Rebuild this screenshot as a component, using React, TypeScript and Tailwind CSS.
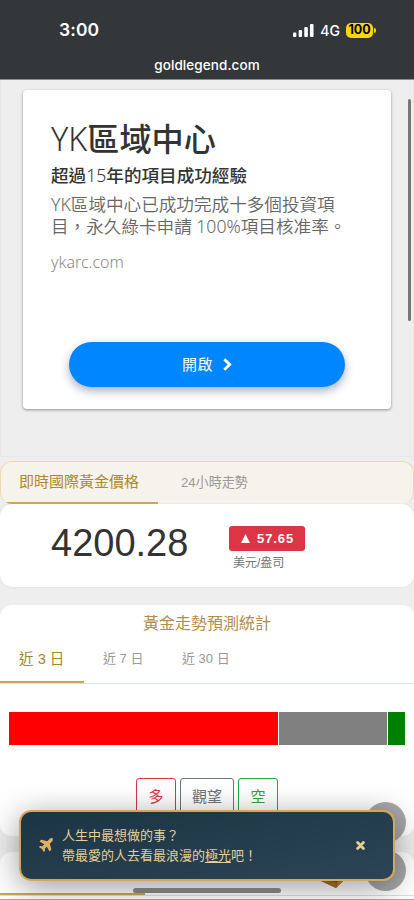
import clsx from "clsx";
import { FaPlane } from "react-icons/fa";

const forecast = [
    { label: "多", value: 268, bar: "bg-[#ff0000]", button: "w-10 border-[#dc3545] text-[#dc3545]" },
    { label: "觀望", value: 108, bar: "bg-[#808080]", button: "w-[54px] border-[#6c757d] text-[#6c757d]" },
    { label: "空", value: 17, bar: "bg-[#008000]", button: "w-10 border-[#28a745] text-[#28a745]" },
];

const ranges = [
    { title: "近 3 日", className: "w-[84px] pl-[19px] text-[14.6px] leading-[45px] text-[#a9851f]" },
    { title: "近 7 日", className: "w-[79px] pl-[19px] text-[13px] leading-[43px] text-[#999]" },
    { title: "近 30 日", className: "w-[90px] pl-[19px] text-[13px] leading-[43px] text-[#999]" },
];

function StatusBar() {
    return (
        <header className="h-20 shrink-0 border-b border-[#8b8c8d] bg-[#343739] font-['Inter','Liberation_Sans',sans-serif] text-white">
            <div className="flex h-[61px] items-center pl-[59px] pr-[38px]">
                <span className="w-[235px] text-[17.5px] font-semibold tracking-[0.1px]">3:00</span>
                <svg className="h-[13px] w-[21px]" viewBox="0 0 21 13" fill="white">
                    <rect x="0" y="8.5" width="3.4" height="4.5" rx="1" />
                    <rect x="5.7" y="6" width="3.4" height="7" rx="1" />
                    <rect x="11.3" y="3" width="3.6" height="10" rx="1" />
                    <rect x="17" y="0" width="3.6" height="13" rx="1" />
                </svg>
                <span className="ml-[6px] w-[26px] text-[14px] font-medium">4G</span>
                <span className="flex h-[15px] w-[27px] items-center justify-center rounded-[5px] bg-[#fcd60a] text-[12.5px] font-bold text-black">
                    100
                </span>
                <span className="ml-px h-[5px] w-[2px] rounded-r-full bg-[#fcd60a]" />
            </div>
            <div className="-mt-[4px] text-center text-[13.5px] font-medium leading-[17px] tracking-[0.08px]">goldlegend.com</div>
        </header>
    );
}

function AdCard() {
    return (
        <section className="h-[377px] shrink-0 border border-t-0 border-[#e6e6e6] px-[22px] pt-[10px]">
            <div className="flex h-[319px] flex-col rounded-[4px] bg-white px-[28px] pt-[28px] font-['Noto_Sans','Noto_Sans_CJK_TC',sans-serif] shadow-[0_1px_3px_rgba(0,0,0,0.4)]">
                <h1 className="whitespace-nowrap text-[32.2px] leading-[41px] text-[#333]">
                    <span className="font-[350]">YK</span>
                    <span className="font-medium">區域中心</span>
                </h1>
                <h2 className="mt-[4px] whitespace-nowrap text-[17.6px] font-medium leading-[24px] text-[#333]">
                    超過<span className="font-[350]">15</span>年的項目成功經驗
                </h2>
                <p className="mt-[6px] whitespace-nowrap text-[17.6px] font-[350] leading-[22px] text-[#666]">
                    YK區域中心已成功完成十多個投資項
                    <br />
                    目，永久綠卡申請 100%項目核准率。
                </p>
                <span className="mt-[15px] text-[16px] font-[350] leading-[20px] text-[#8a8a8a]">ykarc.com</span>
                <button className="mx-[18px] mt-[70px] flex h-[45px] shrink-0 items-center justify-center gap-[10px] rounded-full bg-[#0086ff] text-[15px] text-white shadow-[0_4px_10px_rgba(40,60,90,0.4)]">
                    <span className="tracking-[0.4px]">開啟</span>
                    <svg className="h-[13px] w-[9px]" viewBox="0 0 9 13" fill="none" stroke="white" strokeWidth="2.8">
                        <path d="M1.3 1.2 6.7 6.5 1.3 11.8" />
                    </svg>
                </button>
            </div>
        </section>
    );
}

function PriceCard() {
    return (
        <section className="shrink-0">
            <div className="mt-[4px] flex h-[43px] items-stretch overflow-hidden rounded-[12px] border border-b-0 border-[#ead9ad] bg-[#f5f3ec]">
                <div className="w-[157px] border-b-2 border-[#c9a957] pl-[18px] text-[15px] leading-[40px] text-[#b08a24]">即時國際黃金價格</div>
                <div className="pl-[23px] text-[13.1px] leading-[41px] text-[#999]">24小時走勢</div>
            </div>
            <div className="flex h-[83px] rounded-[12px] bg-white pl-[51px] shadow-[0_0_2px_rgba(0,0,0,0.12)]">
                <div className="w-[178px] pt-[16px] font-['Liberation_Sans',sans-serif] text-[38px] leading-[46px] text-[#333]">4200.28</div>
                <div className="pt-[22px]">
                    <div className="flex h-[25px] w-[76px] items-center rounded-[3px] bg-[#dc3545] pl-[12px] font-['Liberation_Sans',sans-serif] text-[13px] font-bold tracking-[0.9px] text-white">
                        <svg className="mr-[7px] h-[9px] w-[9px]" viewBox="0 0 9 9" fill="white">
                            <path d="M4.5 0 9 9H0z" />
                        </svg>
                        57.65
                    </div>
                    <div className="pl-[4px] text-[12px] leading-[24px] text-[#6c757d]">美元/盎司</div>
                </div>
            </div>
        </section>
    );
}

function ForecastCard() {
    return (
        <section className="mt-[18px] h-[231px] shrink-0 rounded-[12px] bg-white">
            <h3 className="pt-[6px] text-center text-[16px] leading-[26px] text-[#b58b4c]">黃金走勢預測統計</h3>
            <div className="flex h-[47px] border-b border-[#dce3e3]">
                {ranges.map((range, i) => (
                    <div key={range.title} className={clsx("whitespace-nowrap", range.className, i === 0 && "h-[46px] border-b-2 border-[#c9a45f]")}>
                        {range.title}
                    </div>
                ))}
            </div>
            <div className="mx-[9px] mt-[28px] flex h-[33px] gap-px">
                {forecast.map((item) => (
                    <div key={item.label} className={item.bar} style={{ flexGrow: item.value, flexBasis: 0 }} />
                ))}
            </div>
            <div className="mt-[33px] flex justify-center gap-[4px]">
                {forecast.map((item) => (
                    <button key={item.label} className={clsx("h-9 rounded-[3px] border text-[15px] leading-[33px]", item.button)}>
                        {item.label}
                    </button>
                ))}
            </div>
        </section>
    );
}

function Toast() {
    return (
        <div className="absolute left-[19px] top-[810px] flex h-[71px] w-[376px] items-center rounded-[12px] border-2 border-[#d4a55b] bg-linear-to-br from-[#1c3545] to-[#2b4556] pl-[18px] pr-[28px] text-[#e6cf92] shadow-[0_6px_32px_rgba(0,0,0,0.4)]">
            <FaPlane className="-mt-[3px] h-[16px] w-[16px] -rotate-45 text-[#dcb066]" />
            <p className="ml-[7px] flex-1 whitespace-nowrap text-[13px] leading-[20px]">
                人生中最想做的事？
                <br />
                帶最愛的人去看最浪漫的<u className="underline-offset-2">極光</u>吧！
            </p>
            <svg className="h-[9px] w-[9px]" viewBox="0 0 9 9" stroke="#e6cf92" strokeWidth="2.8" strokeLinecap="round">
                <path d="M1.6 1.6 7.4 7.4M7.4 1.6 1.6 7.4" />
            </svg>
        </div>
    );
}

export default function App() {
    return (
        <div className="relative flex h-[900px] w-[414px] flex-col overflow-hidden bg-[#eeeeee] font-['Liberation_Sans','Noto_Sans_CJK_TC',sans-serif]">
            <StatusBar />
            <AdCard />
            <PriceCard />
            <ForecastCard />

            {/* Next section, mostly under the toast */}
            <section className="mt-[16px] h-12 shrink-0 rounded-t-[12px] bg-white">
                <div className="flex h-[44px] border-b border-[#ddd]">
                    <div className="h-[43px] w-[145px] border-b-2 border-[#c9a957]" />
                </div>
                <div className="mt-[3px] h-px bg-[#aaa]" />
            </section>

            <div className="absolute left-[365px] top-[802px] flex flex-col gap-[7px]">
                <div className="h-[41px] w-[41px] rounded-full bg-[#a8a8a8]" />
                <div className="h-[41px] w-[41px] rounded-full bg-[#a8a8a8]" />
            </div>
            <svg className="absolute left-[319px] top-[871px] h-[17px] w-[25px]" viewBox="0 0 25 17">
                <path d="M0 9 17 17 25 9 12 2z" fill="#7a501c" />
                <path d="M17 17 19 9h6z" fill="#c18a35" />
                <path d="M0 9 18 11 17 17z" fill="#a97429" />
            </svg>

            <Toast />

            {/* Home indicator and page scrollbar */}
            <div className="absolute left-[133px] top-[888px] h-[5px] w-[148px] rounded-full bg-[#777]" />
            <div className="absolute left-[408px] top-[99px] h-[222px] w-[3px] rounded-full bg-[#777]" />
        </div>
    );
}
